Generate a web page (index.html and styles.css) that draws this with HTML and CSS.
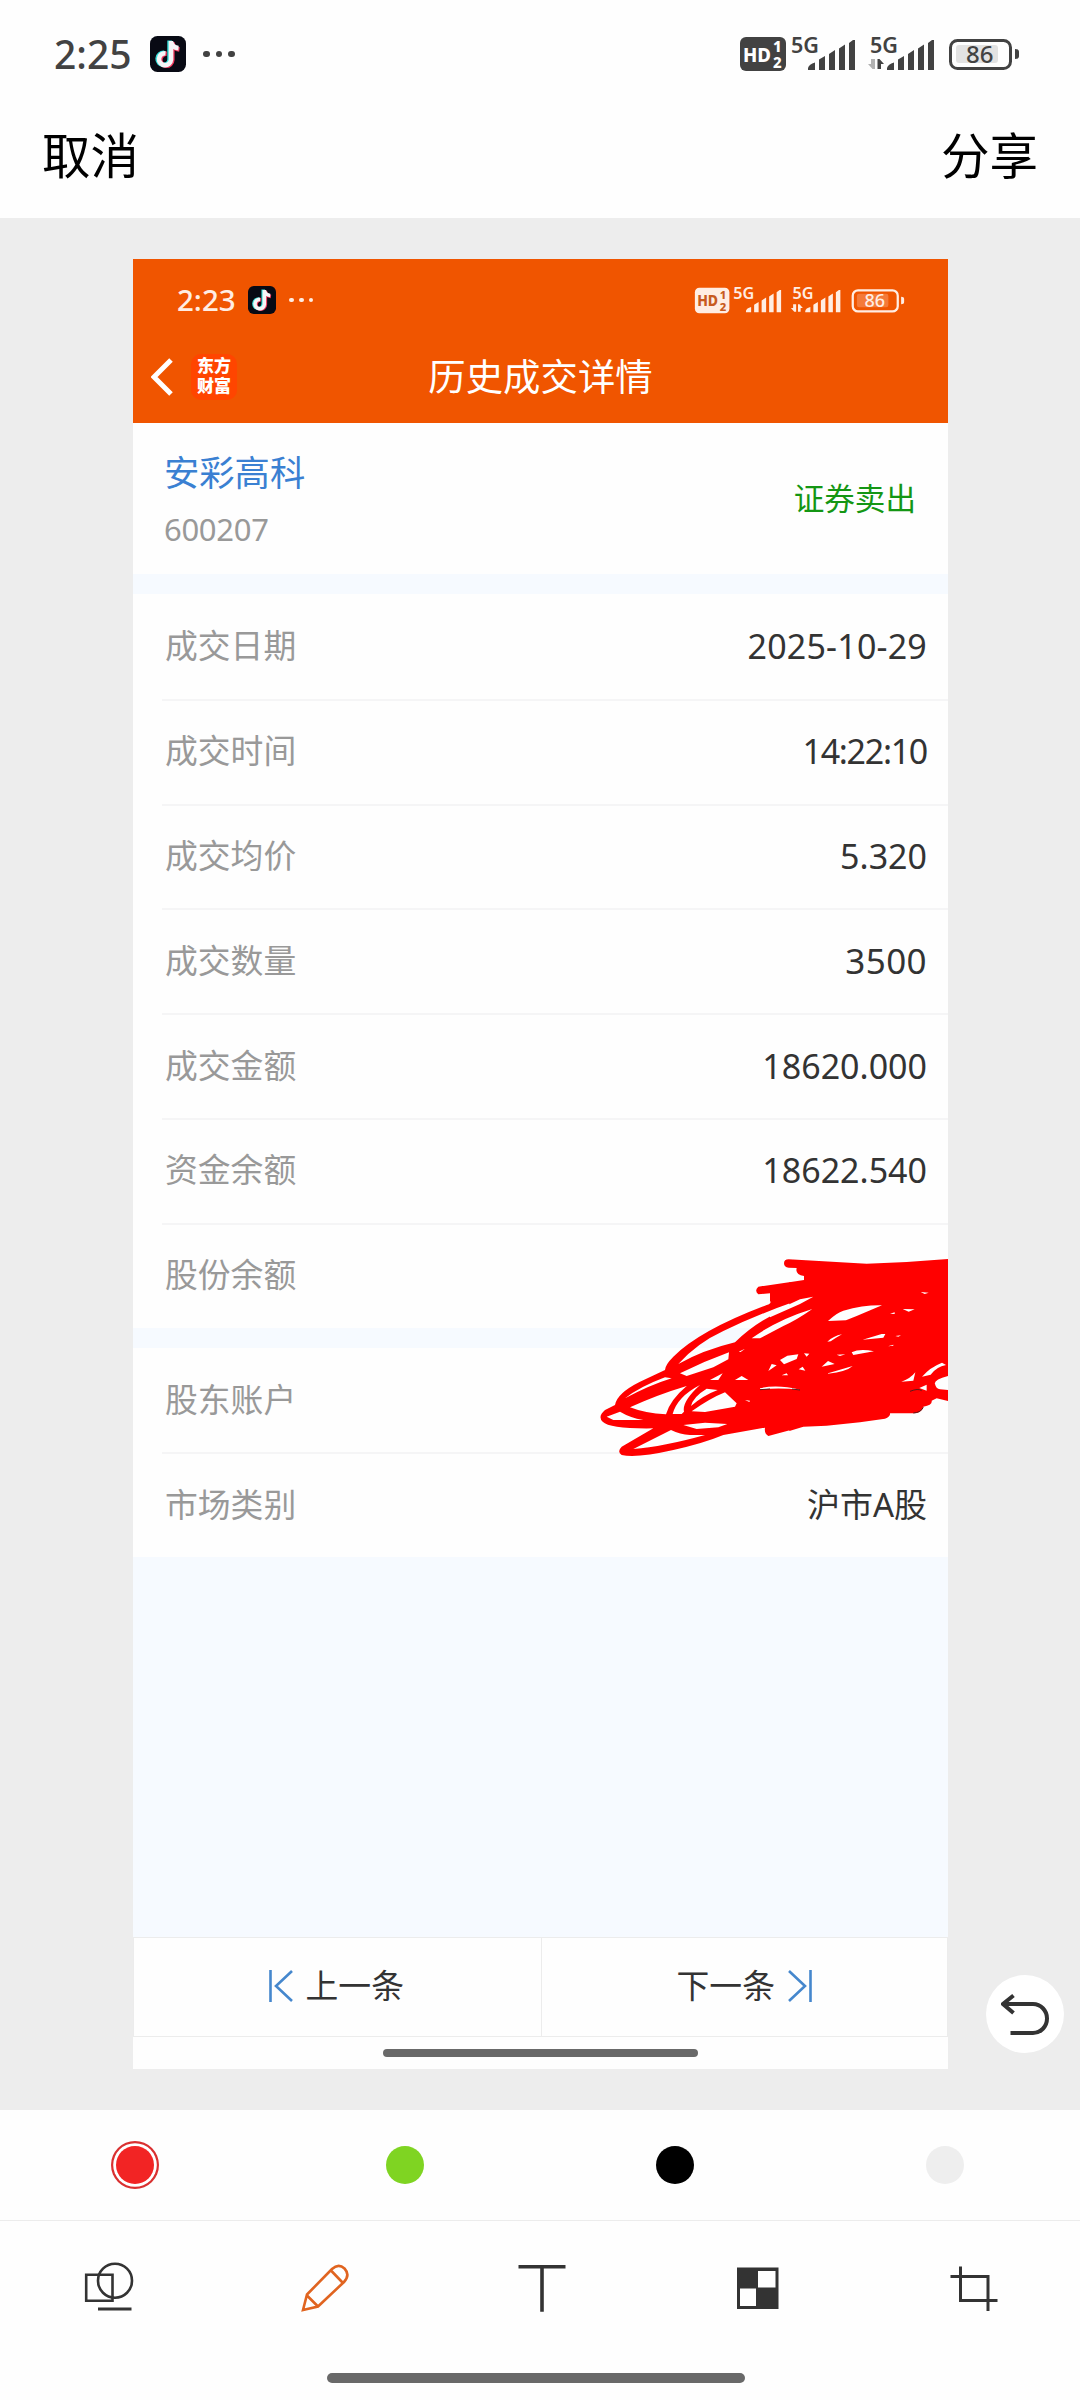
FILE: index.html
```html
<!DOCTYPE html>
<html lang="zh-CN">
<head>
  <meta charset="UTF-8">
  <meta name="viewport" content="width=device-width, initial-scale=1.0">
  <title>编辑图片</title>
  <link rel="stylesheet" href="styles.css">
</head>
<body>
  <!-- Shared icons -->
  <svg class="hidden" xmlns="http://www.w3.org/2000/svg">
    <symbol id="tiktok" viewBox="0 0 36 36">
      <rect width="36" height="36" rx="7.5" fill="#080a14"/>
      <g fill="none" stroke-width="4.6">
        <path stroke="#35e0dc" d="M19.6 4.5v19a6 6 0 1 1-5.5-6.6"/>
        <path stroke="#f0375c" d="M22.3 6v18a6 6 0 1 1-5.5-6.2M22.3 7c.8 3.4 3.2 6 7.2 6.6"/>
        <path stroke="#f5f5f7" d="M21 5v18.6a6 6 0 1 1-5.5-6.4M21 5.5c.7 3.7 3.5 6.3 7.5 6.6"/>
      </g>
    </symbol>
    <symbol id="signal" viewBox="0 0 48 30">
      <path d="M0 30v-2q1-4 7-5.5v7.5zM11 30v-10.5l6-3.5v14zM21 30v-16l6-4v20zM31 30v-21.5l6-4v25.5zM41 30v-27l4-3h2v30z"/>
    </symbol>
  </svg>

  <div class="status-bar">
    <div class="status-left">
      <span class="time">2:25</span>
      <svg class="app-icon"><use href="#tiktok"/></svg>
      <span class="dots"><i></i><i></i><i></i></span>
    </div>
    <svg class="status-icons" viewBox="0 0 279 36">
      <rect y="1" width="46" height="34" rx="6"/>
      <g class="badge-text">
        <text x="3" y="25.5" font-size="20" textLength="28" lengthAdjust="spacingAndGlyphs">HD</text>
        <text x="33" y="16" font-size="15">1</text>
        <text x="33" y="31.5" font-size="15">2</text>
      </g>
      <text x="51" y="16.5" font-size="22" font-weight="600" textLength="28" lengthAdjust="spacingAndGlyphs">5G</text>
      <use href="#signal" x="68" y="4" width="48" height="30"/>
      <text x="130" y="16.5" font-size="22" font-weight="600" textLength="28" lengthAdjust="spacingAndGlyphs">5G</text>
      <use href="#signal" x="147" y="4" width="48" height="30"/>
      <path opacity=".4" d="M131 23h4v10h-2.5l-4.5-5h3z"/>
      <path d="M137.5 33v-10h2l4.5 5h-3v5z"/>
      <rect class="level" x="216" y="9" width="42" height="18" rx="3"/>
      <path d="M275 13q4 0 4 3v4q0 3-4 3z"/>
      <text x="226" y="27" font-size="24" font-weight="500">86</text>
      <rect class="battery" x="210.5" y="4.5" width="60" height="28" rx="7"/>
    </svg>
  </div>

  <div class="actions">
    <span>取消</span>
    <span>分享</span>
  </div>

  <div class="canvas">
    <div class="shot">
      <div class="shot-header">
        <div class="status-bar small">
          <div class="status-left">
            <span class="time">2:23</span>
            <svg class="app-icon"><use href="#tiktok"/></svg>
            <span class="dots"><i></i><i></i><i></i></span>
          </div>
          <svg class="status-icons" viewBox="0 0 279 36">
            <rect y="1" width="46" height="34" rx="6"/>
            <g class="badge-text">
              <text x="3" y="25.5" font-size="20" textLength="28" lengthAdjust="spacingAndGlyphs">HD</text>
              <text x="33" y="16" font-size="15">1</text>
              <text x="33" y="31.5" font-size="15">2</text>
            </g>
            <text x="51" y="16.5" font-size="22" font-weight="600" textLength="28" lengthAdjust="spacingAndGlyphs">5G</text>
            <use href="#signal" x="68" y="4" width="48" height="30"/>
            <text x="130" y="16.5" font-size="22" font-weight="600" textLength="28" lengthAdjust="spacingAndGlyphs">5G</text>
            <use href="#signal" x="147" y="4" width="48" height="30"/>
            <path d="M131 23h4v10h-2.5l-4.5-5h3zM137.5 33v-10h2l4.5 5h-3v5z"/>
            <rect class="level" x="216" y="9" width="42" height="18" rx="3"/>
            <path d="M275 13q4 0 4 3v4q0 3-4 3z"/>
            <text x="226" y="27" font-size="24" font-weight="500">86</text>
            <rect class="battery" x="210.5" y="4.5" width="60" height="28" rx="7"/>
          </svg>
        </div>
        <div class="title-bar">
          <div class="title-left">
            <svg class="back" viewBox="0 0 22 38"><path d="M20 2L3 19l17 17" fill="none" stroke="#fff" stroke-width="5"/></svg>
            <div class="brand">东方<br>财富</div>
          </div>
          <h1>历史成交详情</h1>
        </div>
      </div>

      <div class="stock">
        <div>
          <div class="stock-name">安彩高科</div>
          <div class="stock-code">600207</div>
        </div>
        <div class="stock-side">证券卖出</div>
      </div>

      <div class="rows">
        <div class="row"><span>成交日期</span><b class="date">2025-10-29</b></div>
        <div class="row"><span>成交时间</span><b class="clock">14:22:10</b></div>
        <div class="row"><span>成交均价</span><b>5.320</b></div>
        <div class="row"><span>成交数量</span><b class="count">3500</b></div>
        <div class="row"><span>成交金额</span><b>18620.000</b></div>
        <div class="row"><span>资金余额</span><b>18622.540</b></div>
        <div class="row"><span>股份余额</span></div>
      </div>
      <div class="rows">
        <div class="row"><span>股东账户</span></div>
        <div class="row"><span>市场类别</span><b class="market">沪市A股</b></div>
      </div>
      <div class="blank"></div>

      <div class="pager">
        <div class="pager-btn">
          <svg viewBox="0 0 24 32"><path d="M1.5 0v32M23 1L7 16l16 15"/></svg>
          <span>上一条</span>
        </div>
        <div class="pager-btn">
          <span>下一条</span>
          <svg viewBox="0 0 24 32"><path d="M22.5 0v32M1 1l16 15L1 31"/></svg>
        </div>
      </div>
      <div class="home-bar small"></div>

      <!-- Red pen drawing over the account rows -->
      <svg class="scribble" viewBox="0 0 1104 720">
        <!-- loops on the left -->
        <path class="ink" transform="translate(30 60)" d="M602 96L505 110Q492 122 505 133L540 130V153Q546 160 530 165Q330 240 250 320Q225 345 225 360L150 395Q80 430 75 465L45 480Q22 500 38 515Q60 537 190 535L95 590Q80 605 95 615Q140 625 250 600Q340 580 400 555L525 533Q522 550 535 558L602 540Z
          M265 342Q320 280 400 243Q500 195 600 160V170Q500 212 435 277Q340 300 265 342Z
          M270 370Q340 335 417 307L415 328L370 352L290 378Z
          M105 445Q150 410 225 382L245 385Q180 405 105 445Z
          M120 472Q200 435 290 408Q240 450 228 493Q165 490 120 472Z
          M50 500L90 485Q120 503 160 510H70Z
          M248 492Q262 440 330 405Q275 455 282 485L275 492Z
          M303 468Q310 440 350 416L383 420Q340 436 303 468Z
          M305 484Q360 445 405 427L440 460L435 470L345 486Z
          M280 525L345 518L412 522L385 532L320 537Z
          M243 540Q270 553 300 555H345Q220 590 130 597Z
          M360 390L398 370L385 390ZM435 390L455 378L475 390ZM465 450L480 452L478 456Z"/>
        <!-- dense part on the right -->
        <path class="ink" d="M628 157L672 150V138Q645 135 650 114L626 113Q612 112 612 100Q612 88 626 88L860 101Q980 98 1104 87V438Q1060 450 1065 462Q1068 476 1080 478L1104 480V513L1070 505L1055 512Q1058 525 1030 530Q1024 550 1000 550H930Q932 560 915 566L840 577L740 587L670 590L628 603Z"/>
        <path class="gap" d="M744 273Q770 248 790 242Q850 225 906 226L830 258L798 271ZM515 325Q590 270 697 237Q650 270 610 288L540 325ZM570 250L660 208L700 200L660 222L570 262ZM600 390L622 377L655 373L650 387L612 403ZM540 475Q590 462 660 479Q600 472 540 478ZM815 367Q840 354 882 364L820 375ZM848 329L905 312H916L910 323ZM742 335Q760 318 786 313L768 323L752 334ZM968 237L1004 238L986 245ZM725 410L744 393L764 402ZM744 430L818 408Q800 425 744 431ZM964 455Q990 447 1006 427L1000 452ZM1026 440Q1050 412 1086 398L1098 405Q1070 410 1052 434ZM1018 474L1040 464V482ZM565 423L575 402L590 406ZM1022 186L1046 188L1034 192ZM656 418L668 410L676 422ZM672 370L688 371L680 380ZM930 251L944 247V252ZM770 374L796 373L780 378ZM605 436L620 430L624 436ZM924 349L940 344V347ZM476 365L495 356L482 366ZM946 318L963 316L955 320Z"/>
        <path class="covered" d="M540 479L570 477M636 477L660 480M990 484Q1015 474 1025 482M1030 532Q1022 548 1000 549"/>
      </svg>
    </div>
    <div class="undo">
      <svg viewBox="0 0 48 42"><path d="M2 11h30a14 14.5 0 0 1 0 29H9.5"/><path d="M12.5 2.5L2 11l10.5 9"/></svg>
    </div>
  </div>

  <div class="palette">
    <div class="cell"><i class="swatch red"></i></div>
    <div class="cell"><i class="swatch green"></i></div>
    <div class="cell"><i class="swatch black"></i></div>
    <div class="cell"><i class="swatch gray"></i></div>
  </div>

  <div class="tools">
    <svg viewBox="0 0 60 60"><path d="M8.2 18.7h26.3v26H8.2z"/><circle cx="37" cy="24.7" r="17"/><path d="M20 53h33.5" stroke-width="3"/></svg>
    <svg class="active" viewBox="0 0 60 60"><path d="M9 54l4-15.5 25-25.5q6.500-6 12.500-.5 6 6.500-.5 13.500L24 50.500zM13 39.500l10.500 10.500M37 14.500l11.500 12"/></svg>
    <svg viewBox="0 0 60 60"><path d="M8.5 10.7h47M32 10.700v45" stroke-width="3.6"/></svg>
    <svg viewBox="0 0 60 60"><path d="M11 11.5h41.5v41.5H11zM32 15v16.5h17.5V15zM14 32.5v17.5h16V32.5z" class="solid"/></svg>
    <svg viewBox="0 0 60 60"><path d="M8.5 20.5h37.5v34.5M18.5 10.5v34h37" stroke-width="3"/></svg>
  </div>
  <div class="home-bar"></div>
</body>
</html>
```
FILE: styles.css
```css
/* General Styles */
* {
  box-sizing: border-box;
  margin: 0;
  padding: 0;
}

body {
  width: 1080px;
  height: 2400px;
  background-color: #fefefe;
  font-family: "Noto Sans", "Noto Sans CJK SC", sans-serif;
  color: #333;
  display: flex;
  flex-direction: column;
  overflow: hidden;
}

svg {
  display: block;
}

.hidden {
  width: 0;
  height: 0;
  position: absolute;
}

/* Status bar */
.status-bar {
  height: 108px;
  padding: 0 61px 0 54px;
  display: flex;
  justify-content: space-between;
  align-items: center;
  color: #424242;
}

.status-left {
  display: flex;
  align-items: center;
}

.time {
  width: 96px;
  font-size: 39px;
  line-height: 40px;
  font-weight: 500;
}

.app-icon {
  width: 36px;
  height: 36px;
}

.dots {
  display: flex;
  gap: 6px;
  margin-left: 17px;
}

.dots i {
  width: 6.5px;
  height: 6.5px;
  border-radius: 50%;
  background: currentColor;
}

.status-icons {
  width: 279px;
  height: 36px;
  fill: currentColor;
  overflow: visible;
}

.status-icons .badge-text {
  fill: #fff;
  font-weight: 800;
}

.status-icons .level {
  opacity: 0.15;
}

.status-icons .battery {
  fill: none;
  stroke: currentColor;
  stroke-width: 3;
}

/* Cancel / share */
.actions {
  height: 110px;
  padding: 0 42px 16px 42px;
  display: flex;
  justify-content: space-between;
  align-items: center;
  font-size: 48.5px;
  line-height: 60px;
  color: #000;
}

.canvas {
  height: 1892px;
  background: #ededed;
  padding-top: 41px;
  position: relative;
}

/* The picture being edited */
.shot {
  width: 815px;
  height: 1810px;
  margin-left: 133px;
  background: #fefefe;
  display: flex;
  flex-direction: column;
  position: relative;
}

.shot-header {
  height: 164px;
  background: #f05500;
  color: #fff;
}

.status-bar.small {
  height: 82px;
  padding: 0 43px 0 44px;
  color: #ffede3;
}

.small .time {
  width: 71px;
  font-size: 29.5px;
}

.small .app-icon {
  width: 28px;
  height: 28px;
}

.small .dots {
  gap: 5px;
  margin-left: 13px;
}

.small .dots i {
  width: 4.8px;
  height: 4.8px;
}

.small .status-icons {
  width: 211px;
  height: 27px;
}

.small .badge-text {
  fill: #c85a20;
}

.small .level {
  opacity: 0.25;
}

.title-bar {
  height: 72px;
  display: grid;
  grid-template-columns: 1fr auto 1fr;
  align-items: center;
}

.title-left {
  display: flex;
  align-items: center;
  padding-left: 18px;
  gap: 18px;
}

.back {
  width: 22px;
  height: 38px;
}

.brand {
  width: 46px;
  height: 46px;
  border-radius: 10px;
  background: #ff4500;
  padding-top: 2px;
  text-align: center;
  font-size: 17px;
  line-height: 20px;
  font-weight: 900;
}

.title-bar h1 {
  font-size: 37.4px;
  line-height: 50px;
  font-weight: 400;
}

.stock {
  height: 151px;
  padding: 0 32px 2px 31px;
  display: flex;
  justify-content: space-between;
  align-items: center;
}

.stock-name {
  font-size: 35.3px;
  line-height: 50px;
  color: #3a80d2;
}

.stock-code {
  font-size: 31px;
  line-height: 40px;
  margin-top: 12px;
  color: #999;
  letter-spacing: -0.3px;
}

.stock-side {
  font-size: 30.6px;
  line-height: 40px;
  color: #149614;
}

.rows {
  border-top: 20px solid #f6faff;
}

.row {
  height: 104.8px;
  margin-left: 29px;
  padding: 0 21px 2px 3px;
  border-top: 2px solid #f5f5f6;
  display: flex;
  justify-content: space-between;
  align-items: center;
  font-size: 32.8px;
  line-height: 48px;
}

.row:first-child {
  border-top-color: transparent;
}

.row span {
  color: #999;
}

.row b {
  font-weight: 400;
  font-size: 34px;
}

.row .date {
  letter-spacing: 0.2px;
}

.row .clock {
  letter-spacing: -1.3px;
}

.row .count {
  font-size: 35px;
  letter-spacing: 0.4px;
}

.row .market {
  font-size: 33px;
}

.blank {
  flex: 1;
  background: #f6faff;
}

/* Previous / next */
.pager {
  height: 100px;
  border: 1px solid #ececec;
  display: grid;
  grid-template-columns: 1fr 1fr;
}

.pager-btn {
  display: flex;
  justify-content: center;
  align-items: center;
  gap: 13px;
  padding: 0 2px 2px 0;
  font-size: 32.8px;
  line-height: 48px;
}

.pager-btn + .pager-btn {
  border-left: 1px solid #ececec;
  padding-right: 0;
}

.pager-btn svg {
  width: 24px;
  height: 32px;
  fill: none;
  stroke: #4587cd;
  stroke-width: 2.6;
}

/* Pen marks lie over the rows */
.scribble {
  position: absolute;
  left: 447px;
  top: 971px;
  width: 368px;
  height: 240px;
}

.ink {
  fill: #f00;
  fill-rule: evenodd;
}

.gap {
  fill: #fefefe;
}

.covered {
  fill: none;
  stroke: #5a1a1a;
  stroke-width: 3;
}

.undo {
  position: absolute;
  right: 16px;
  top: 1757px;
  width: 78px;
  height: 78px;
  border-radius: 50%;
  background: #fff;
  display: flex;
  justify-content: center;
  align-items: center;
}

.undo svg {
  width: 48px;
  height: 42px;
  fill: none;
  stroke: #333;
  stroke-width: 4;
}

/* Colour palette */
.palette {
  height: 111px;
  display: grid;
  grid-template-columns: repeat(4, 1fr);
  border-bottom: 1px solid #ececec;
}

.cell {
  display: flex;
  justify-content: center;
  align-items: center;
}

.swatch {
  width: 38px;
  height: 38px;
  border-radius: 50%;
}

.red {
  background: #f22424;
  box-shadow: 0 0 0 2.8px #fff, 0 0 0 5px #d93030;
}

.green {
  background: #7fd422;
}

.black {
  background: #000;
}

.gray {
  background: #eee;
}

/* Tools */
.tools {
  height: 152px;
  padding-top: 35px;
  display: grid;
  grid-template-columns: repeat(5, 1fr);
  justify-items: center;
}

.tools svg {
  width: 60px;
  height: 60px;
  fill: none;
  stroke: #333;
  stroke-width: 2.6;
}

.tools .active {
  stroke: #e06420;
}

.tools .solid {
  fill: #333;
  fill-rule: evenodd;
  stroke: none;
}

.home-bar {
  width: 418px;
  height: 10px;
  margin-left: 327px;
  border-radius: 5px;
  background: #696969;
}

.home-bar.small {
  width: 315px;
  height: 8px;
  margin: 12px auto;
}
```
